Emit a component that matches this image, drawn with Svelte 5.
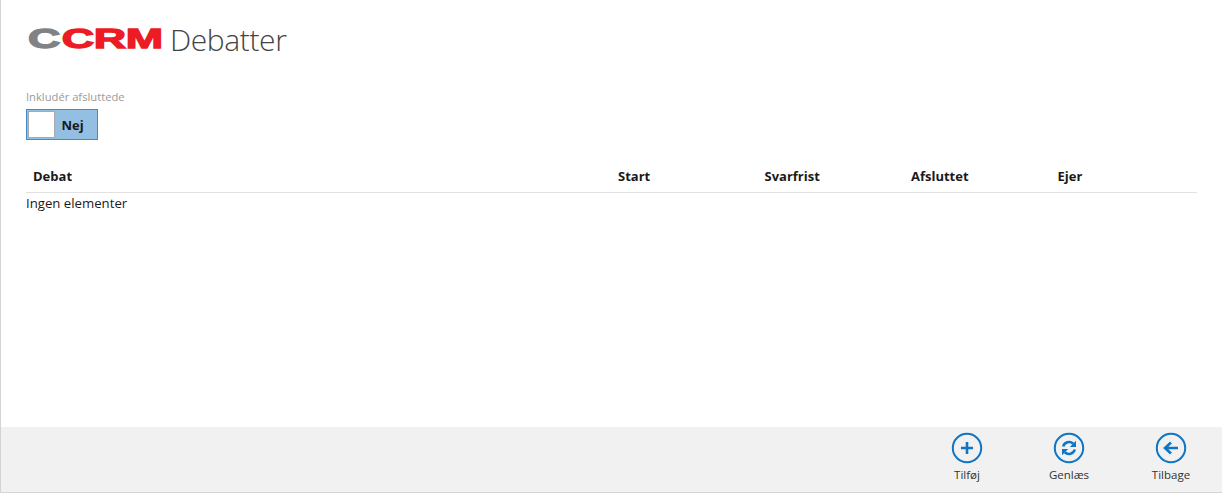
<script>
  let includeClosed = false;

  const columns = [
    { title: "Debat", width: 585 },
    { title: "Start", width: 146.5 },
    { title: "Svarfrist", width: 146.5 },
    { title: "Afsluttet", width: 146.5 },
    { title: "Ejer", width: 140 },
  ];
</script>

<main>
  <div class="content">
    <header>
      <span class="logo"><span class="grey">C</span><span class="red">CRM</span></span>
      <h1>Debatter</h1>
    </header>

    <div class="filter">
      <span class="label">Inkludér afsluttede</span>
      <button class="toggle" on:click={() => (includeClosed = !includeClosed)}>
        <span class="knob"></span>
        <span class="state">{includeClosed ? "Ja" : "Nej"}</span>
      </button>
    </div>

    <div class="thead">
      {#each columns as col}
        <div class="th" style="width: {col.width}px">{col.title}</div>
      {/each}
    </div>
    <div class="empty">Ingen elementer</div>
  </div>

  <footer>
    <button class="action">
      <svg width="32" height="32" viewBox="0 0 32 32">
        <circle cx="16" cy="16" r="14.2" />
        <path d="M16 10v12M10 16h12" />
      </svg>
      <span>Tilføj</span>
    </button>
    <button class="action">
      <svg width="32" height="32" viewBox="0 0 32 32">
        <circle cx="16" cy="16" r="14.2" />
        <path d="M10.2 14.5a6 6 0 0 1 10-2.8" />
        <path class="solid" d="M23 8.8v6.2h-6.2z" />
        <path d="M21.8 17.5a6 6 0 0 1-10 2.8" />
        <path class="solid" d="M9 23.2V17h6.2z" />
      </svg>
      <span>Genlæs</span>
    </button>
    <button class="action">
      <svg width="32" height="32" viewBox="0 0 32 32">
        <circle cx="16" cy="16" r="14.2" />
        <path d="M23 16H11M16 10.5l-6 5.5 6 5.5" />
      </svg>
      <span>Tilbage</span>
    </button>
  </footer>
</main>

<style>
  :global(body) {
    margin: 0;
    background: #fff;
  }

  main {
    box-sizing: border-box;
    height: 493px;
    border-left: 1px solid #d4d4d4;
    display: flex;
    flex-direction: column;
    font-family: "Open Sans", "Noto Sans", sans-serif;
    color: #1a1a1a;
    overflow: hidden;
  }

  .content {
    flex: 1;
    padding: 0 25px;
  }

  header {
    display: flex;
    align-items: center;
    height: 78px;
  }

  .logo {
    display: inline-flex;
    width: 134px;
    margin-left: 2px;
    margin-right: 8px;
    font-family: "Liberation Sans", Arial, sans-serif;
    font-weight: 700;
    font-size: 28px;
    line-height: 24px;
    -webkit-text-stroke: 1.3px currentColor;
    transform: scaleX(1.6);
    transform-origin: left center;
    letter-spacing: -0.2px;
  }

  .grey {
    color: #808285;
    margin-right: 1px;
  }

  .red {
    color: #ed1c24;
  }

  h1 {
    margin: 0;
    font-size: 30px;
    font-weight: 300;
    color: #444;
    letter-spacing: -0.4px;
  }

  .filter {
    display: flex;
    flex-direction: column;
    align-items: flex-start;
    margin-top: 11px;
  }

  .label {
    font-size: 11.2px;
    line-height: 16px;
    color: #9a9a9a;
  }

  .toggle {
    display: flex;
    align-items: center;
    box-sizing: border-box;
    width: 72px;
    height: 31px;
    margin-top: 4px;
    padding: 1px;
    border: 1px solid #3e8ccb;
    background: #93c0e2;
    font: inherit;
    cursor: pointer;
  }

  .knob {
    box-sizing: border-box;
    width: 27px;
    height: 27px;
    background: #fff;
    border: 1px solid #a9a9a9;
  }

  .state {
    margin-left: 6.5px;
    font-size: 13px;
    font-weight: 700;
    color: #1a1a1a;
  }

  .thead {
    display: flex;
    height: 53px;
    align-items: flex-end;
    padding-bottom: 7px;
    box-sizing: border-box;
    border-bottom: 1px solid #e2e2e2;
  }

  .th {
    box-sizing: border-box;
    padding-left: 7px;
    font-size: 13px;
    line-height: 18px;
    font-weight: 700;
    color: #1a1a1a;
  }

  .empty {
    font-size: 13.2px;
    line-height: 20px;
  }

  footer {
    display: flex;
    justify-content: flex-end;
    box-sizing: border-box;
    height: 66px;
    background: #f1f1f1;
    border-bottom: 1px solid #d4d4d4;
  }

  .action {
    display: flex;
    flex-direction: column;
    align-items: center;
    width: 102px;
    padding: 5px 0 0;
    border: 0;
    background: none;
    font: inherit;
    font-size: 11.5px;
    color: #333;
    cursor: pointer;
  }

  .action span {
    margin-top: 3px;
  }

  svg {
    fill: none;
    stroke: #0f75c4;
    stroke-width: 2;
  }

  svg path {
    stroke-width: 2.6;
  }

  svg .solid {
    fill: #0f75c4;
    stroke: none;
  }
</style>
